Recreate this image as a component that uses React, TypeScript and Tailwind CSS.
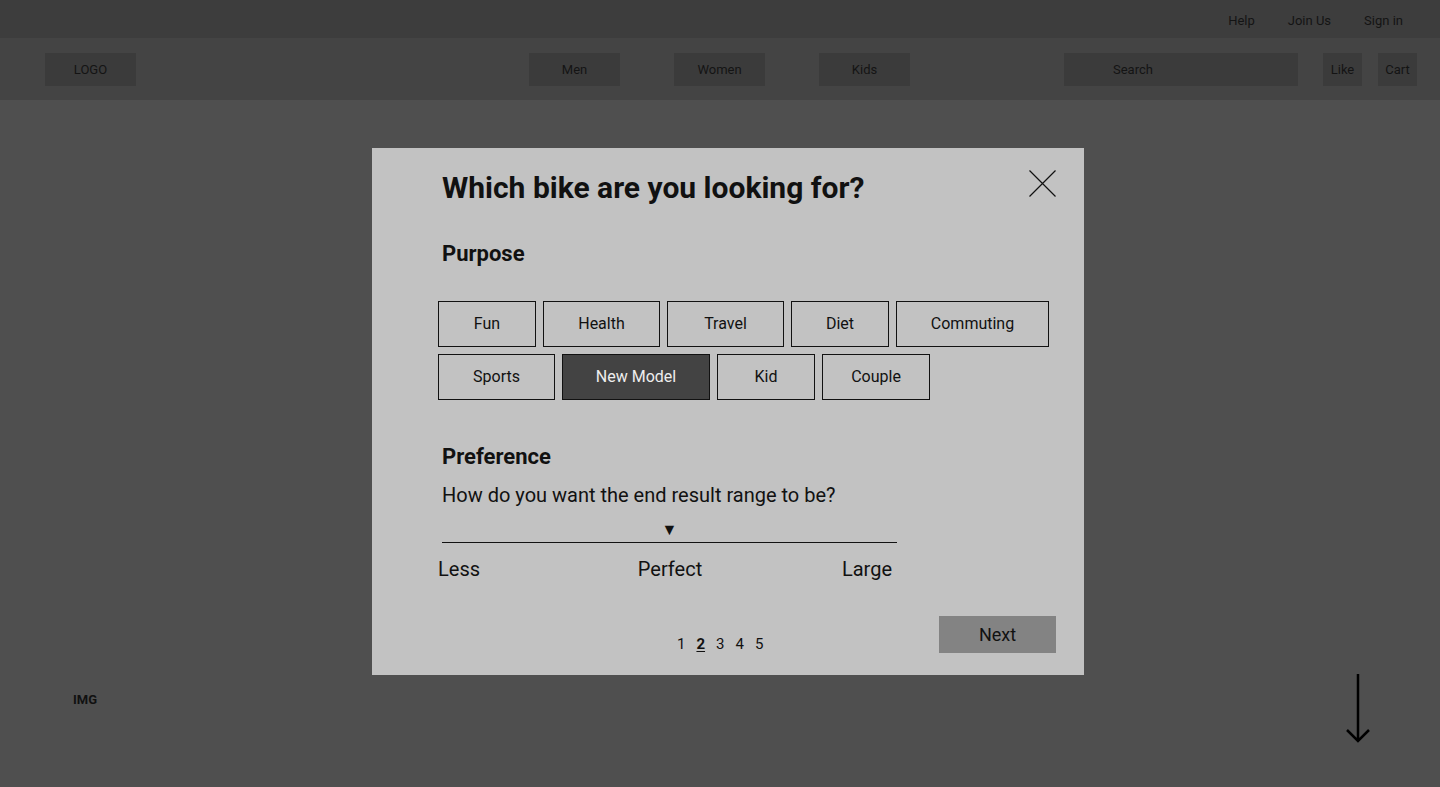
import { useState } from 'react';

const purposes = [
  ['Fun', 'w-[98px]'],
  ['Health', 'w-[117px]'],
  ['Travel', 'w-[117px]'],
  ['Diet', 'w-[98px]'],
  ['Commuting', 'w-[153px]'],
  ['Sports', 'w-[117px]'],
  ['New Model', 'w-[148px]'],
  ['Kid', 'w-[98px]'],
  ['Couple', 'w-[108px]'],
];

function Header() {
  return (
    <header>
      <div className="h-[38px] bg-[#3d3d3d] flex items-center justify-end pt-[3px] pr-[37px] gap-[33px] text-[13px] text-[#141414]">
        <span>Help</span>
        <span>Join Us</span>
        <span>Sign in</span>
      </div>
      <nav className="h-[62px] bg-[#444444] flex items-center pl-[45px] text-[13px] text-[#141414]">
        <div className="shrink-0 w-[91px] h-[33px] pt-[1px] bg-[#3b3b3b] flex items-center justify-center">LOGO</div>
        <div className="shrink-0 flex gap-[54px] ml-[393px]">
          {['Men', 'Women', 'Kids'].map((n) => (
            <div key={n} className="w-[91px] h-[33px] pt-[1px] bg-[#3b3b3b] flex items-center justify-center">
              {n}
            </div>
          ))}
        </div>
        <div className="shrink-0 w-[234px] h-[33px] pt-[1px] bg-[#3b3b3b] flex items-center pl-[49px] ml-[154px]">Search</div>
        <div className="shrink-0 w-[39px] h-[33px] pt-[1px] bg-[#3b3b3b] flex items-center justify-center ml-[25px]">Like</div>
        <div className="shrink-0 w-[39px] h-[33px] pt-[1px] bg-[#3b3b3b] flex items-center justify-center ml-[16px]">Cart</div>
      </nav>
    </header>
  );
}

function Modal() {
  const [picked, setPicked] = useState('New Model');
  return (
    <div className="absolute left-[372px] top-[148px] w-[712px] h-[527px] bg-[#c2c2c2] pl-[70px] pr-[28px] pt-[22px] text-[#111]">
      <button className="absolute right-[28px] top-[22px] w-[27px] h-[27px]">
        <svg width="27" height="27" viewBox="0 0 27 27" fill="none" stroke="#111" strokeWidth="1.2">
          <path d="M0.5 0.5 L26.5 26.5 M26.5 0.5 L0.5 26.5" />
        </svg>
      </button>

      <h1 className="text-[30px] leading-[36px] font-bold">Which bike are you looking for?</h1>

      <h2 className="mt-[34px] text-[22px] leading-[28px] font-bold">Purpose</h2>
      <div className="mt-[33px] -ml-[4px] w-[620px] flex flex-wrap gap-[7px]">
        {purposes.map(([label, w]) => (
          <button
            key={label}
            onClick={() => setPicked(label)}
            className={`${w} h-[46px] border border-[#111] text-[16px] ${
              picked === label ? 'bg-[#434343] text-[#eeeeee]' : 'text-[#111]'
            }`}
          >
            {label}
          </button>
        ))}
      </div>

      <h2 className="mt-[43px] text-[22px] leading-[28px] font-bold">Preference</h2>
      <p className="mt-[12px] text-[20px] leading-[24px]">How do you want the end result range to be?</p>

      <div className="w-[455px] mt-[15px]">
        <div className="text-center text-[16px] leading-[16px]">▼</div>
        <div className="mt-[4px] h-px bg-[#111]" />
      </div>
      <div className="-ml-[4px] w-[464px] mt-[14px] flex text-[20px] leading-[24px]">
        <span className="w-[100px]">Less</span>
        <span className="flex-1 text-center">Perfect</span>
        <span className="w-[100px] text-right pr-[10px]">Large</span>
      </div>

      <div className="mt-[35px] flex items-start">
        <div className="ml-[235px] mt-[19px] flex gap-[11px] text-[15px] leading-[18px]">
          <span>1</span>
          <span className="font-bold underline underline-offset-2">2</span>
          <span>3</span>
          <span>4</span>
          <span>5</span>
        </div>
        <button className="ml-auto w-[117px] h-[37px] bg-[#838383] text-[18px] text-[#111]">Next</button>
      </div>
    </div>
  );
}

export default function App() {
  return (
    <div className="relative h-screen flex flex-col bg-[#4f4f4f] font-['Roboto',sans-serif] overflow-hidden">
      <Header />
      <main className="flex-1 flex flex-col justify-end">
        <div className="flex justify-between items-start pl-[73px] pr-[69px] pb-[44px]">
          <span className="mt-[16px] text-[13px] font-bold text-[#111]">IMG</span>
          <svg width="26" height="69" viewBox="0 0 26 69" fill="none" stroke="#000" strokeWidth="2.5">
            <path d="M13 0 V67 M2 56 L13 67 L24 56" />
          </svg>
        </div>
      </main>
      <Modal />
    </div>
  );
}
